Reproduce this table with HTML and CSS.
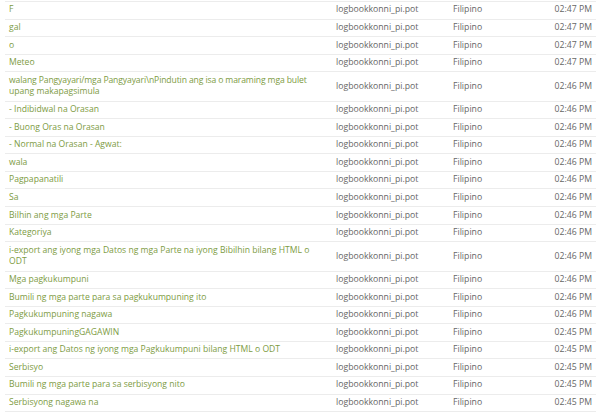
FILE: index.html
```html
<!DOCTYPE html>
<html>
<head>
<meta charset="utf-8">
<link rel="stylesheet" href="styles.css">
</head>
<body>
<table class="list">
<colgroup><col class="c-msg"><col class="c-file"><col class="c-lang"><col class="c-time"></colgroup>
<tbody>
<tr><td class="msg">F</td><td class="meta file">logbookkonni_pi.pot</td><td class="meta">Filipino</td><td class="meta time">02:47 PM</td></tr>
<tr><td class="msg">gal</td><td class="meta file">logbookkonni_pi.pot</td><td class="meta">Filipino</td><td class="meta time">02:47 PM</td></tr>
<tr><td class="msg">o</td><td class="meta file">logbookkonni_pi.pot</td><td class="meta">Filipino</td><td class="meta time">02:47 PM</td></tr>
<tr><td class="msg">Meteo</td><td class="meta file">logbookkonni_pi.pot</td><td class="meta">Filipino</td><td class="meta time">02:47 PM</td></tr>
<tr><td class="msg"><span class="tight">walang Pangyayari/mga Pangyayari\nPindutin ang isa o maraming mga bulet</span><br>upang makapagsimula</td><td class="meta file">logbookkonni_pi.pot</td><td class="meta">Filipino</td><td class="meta time">02:46 PM</td></tr>
<tr><td class="msg">- Indibidwal na Orasan</td><td class="meta file">logbookkonni_pi.pot</td><td class="meta">Filipino</td><td class="meta time">02:46 PM</td></tr>
<tr><td class="msg">- Buong Oras na Orasan</td><td class="meta file">logbookkonni_pi.pot</td><td class="meta">Filipino</td><td class="meta time">02:46 PM</td></tr>
<tr><td class="msg">- Normal na Orasan - Agwat:</td><td class="meta file">logbookkonni_pi.pot</td><td class="meta">Filipino</td><td class="meta time">02:46 PM</td></tr>
<tr><td class="msg">wala</td><td class="meta file">logbookkonni_pi.pot</td><td class="meta">Filipino</td><td class="meta time">02:46 PM</td></tr>
<tr><td class="msg">Pagpapanatili</td><td class="meta file">logbookkonni_pi.pot</td><td class="meta">Filipino</td><td class="meta time">02:46 PM</td></tr>
<tr><td class="msg">Sa</td><td class="meta file">logbookkonni_pi.pot</td><td class="meta">Filipino</td><td class="meta time">02:46 PM</td></tr>
<tr><td class="msg">Bilhin ang mga Parte</td><td class="meta file">logbookkonni_pi.pot</td><td class="meta">Filipino</td><td class="meta time">02:46 PM</td></tr>
<tr><td class="msg">Kategoriya</td><td class="meta file">logbookkonni_pi.pot</td><td class="meta">Filipino</td><td class="meta time">02:46 PM</td></tr>
<tr><td class="msg">i-export ang iyong mga Datos ng mga Parte na iyong Bibilhin bilang HTML o<br>ODT</td><td class="meta file">logbookkonni_pi.pot</td><td class="meta">Filipino</td><td class="meta time">02:46 PM</td></tr>
<tr><td class="msg">Mga pagkukumpuni</td><td class="meta file">logbookkonni_pi.pot</td><td class="meta">Filipino</td><td class="meta time">02:46 PM</td></tr>
<tr><td class="msg">Bumili ng mga parte para sa pagkukumpuning ito</td><td class="meta file">logbookkonni_pi.pot</td><td class="meta">Filipino</td><td class="meta time">02:46 PM</td></tr>
<tr><td class="msg">Pagkukumpuning nagawa</td><td class="meta file">logbookkonni_pi.pot</td><td class="meta">Filipino</td><td class="meta time">02:46 PM</td></tr>
<tr><td class="msg">PagkukumpuningGAGAWIN</td><td class="meta file">logbookkonni_pi.pot</td><td class="meta">Filipino</td><td class="meta time">02:45 PM</td></tr>
<tr><td class="msg">i-export ang Datos ng iyong mga Pagkukumpuni bilang HTML o ODT</td><td class="meta file">logbookkonni_pi.pot</td><td class="meta">Filipino</td><td class="meta time">02:45 PM</td></tr>
<tr><td class="msg">Serbisyo</td><td class="meta file">logbookkonni_pi.pot</td><td class="meta">Filipino</td><td class="meta time">02:45 PM</td></tr>
<tr><td class="msg">Bumili ng mga parte para sa serbisyong nito</td><td class="meta file">logbookkonni_pi.pot</td><td class="meta">Filipino</td><td class="meta time">02:45 PM</td></tr>
<tr><td class="msg">Serbisyong nagawa na</td><td class="meta file">logbookkonni_pi.pot</td><td class="meta">Filipino</td><td class="meta time">02:45 PM</td></tr>
</tbody>
</table>
</body>
</html>
```
FILE: styles.css
```css
html, body {
  margin: 0;
  padding: 0;
  background: #ffffff;
}
body {
  font-family: "Open Sans", "Liberation Sans", sans-serif;
  font-size: 8.7px;
  line-height: 11.7px;
}
.list {
  margin: 1px 0 0 5px;
  width: 591px;
  table-layout: fixed;
  border-collapse: collapse;
}
.c-msg { width: 328px; }
.c-file { width: 116px; }
.c-lang { width: 80px; }
.c-time { width: 67px; }
.list td {
  border-top: 1px solid #ececec;
  border-bottom: 1px solid #ececec;
  padding: 2.45px 4px;
  vertical-align: middle;
}
.list td.msg {
  color: #7d9b3f;
  font-size: 8.6px;
  padding-right: 0;
  white-space: nowrap;
}
.tight {
  letter-spacing: -0.12px;
}
.meta {
  color: #666666;
  white-space: nowrap;
}
.list td.file {
  padding-left: 3px;
}
.time {
  text-align: right;
  padding-right: 3px;
}
```
